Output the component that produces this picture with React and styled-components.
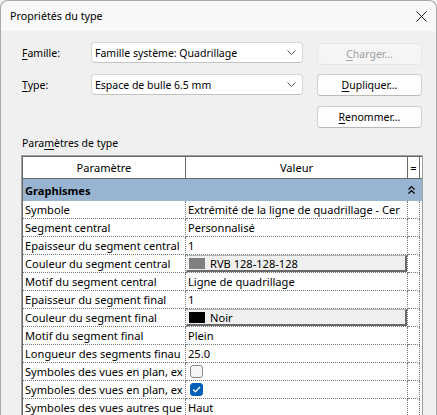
import React from 'react';
import styled, { createGlobalStyle } from 'styled-components';

const GlobalStyle = createGlobalStyle`
  html, body { margin: 0; padding: 0; background: #f0f0f0; }
  body { font-family: "Noto Sans", "Open Sans", sans-serif; font-size: 10.5px; color: #000; }
  * { box-sizing: border-box; }
`;

const Window = styled.div`
  height: 100vh;
  overflow: hidden;
  background: #f0f0f0;
  border: 1px solid #a8a8a8;
  border-bottom: none;
  border-radius: 8px 8px 0 0;
`;

// title bar
const TitleBar = styled.div`
  height: 30px;
  display: flex;
  align-items: center;
  justify-content: space-between;
  padding: 0 9px 0 9px;
  background: #f8f8f8;
  border-radius: 8px 8px 0 0;
  font-size: 10.7px;
`;

const Close = styled.svg`
  width: 11px;
  height: 11px;
`;

const Content = styled.div`
  padding: 11px 0 0 21px;
`;

// Famille / Type section
const FormGrid = styled.div`
  display: grid;
  grid-template-columns: 69px 212px 119px;
  grid-template-rows: 22px 22px 22px;
  row-gap: 10px;
  align-items: start;
`;

const Label = styled.div`
  height: 21px;
  display: flex;
  align-items: center;
`;

const Key = styled.span`
  text-decoration: underline;
  text-underline-offset: 2px;
`;

const Select = styled.div`
  height: 21px;
  display: flex;
  align-items: center;
  justify-content: space-between;
  padding: 0 6px 0 3px;
  background: #fff;
  border: 1px solid #d6d6d6;
  border-bottom-color: #c2c2c2;
  border-radius: 4px;
`;

const Button = styled.div`
  grid-column: 3;
  grid-row: ${p => p.row};
  justify-self: end;
  width: 105px;
  height: 22px;
  display: flex;
  align-items: center;
  justify-content: center;
  background: ${p => (p.disabled ? '#f5f5f5' : '#fdfdfd')};
  color: ${p => (p.disabled ? '#a0a0a0' : '#000')};
  border: 1px solid ${p => (p.disabled ? '#e6e6e6' : '#d0d0d0')};
  border-bottom-color: ${p => (p.disabled ? '#e6e6e6' : '#b8b8b8')};
  border-radius: 4px;
  margin-top: ${p => (p.disabled ? '1px' : '0')};
`;

const SectionLabel = styled.div`
  margin-top: 8px;
  line-height: 15px;
  height: 15px;
`;

// parameter table
const Table = styled.div`
  margin: 4px 0 0 -1px;
  width: 402px;
  border: 1px solid #a0a0a0;
  border-bottom: none;
  background: #fff;
  font-size: 11.1px;
`;

const TableInner = styled.div`
  border-left: 1px solid #696969;
  border-top: 1px solid #696969;
`;

const Row = styled.div`
  display: grid;
  grid-template-columns: 163px 222px 12px 2px;
  height: ${p => p.h || 18}px;
`;

const HeadCell = styled.div`
  display: flex;
  align-items: center;
  justify-content: center;
  border-right: ${p => (p.last ? 'none' : '1px solid #696969')};
  border-bottom: 1px solid #696969;
`;

const GroupRow = styled.div`
  height: 22px;
  display: flex;
  align-items: center;
  justify-content: space-between;
  padding: 0 7px 0 2px;
  background: #99b4d1;
  font-weight: bold;
`;

const Cell = styled.div`
  display: flex;
  align-items: center;
  padding-left: ${p => (p.pad != null ? p.pad : 2)}px;
  border-right: 1px dotted #7a7a7a;
  border-bottom: 1px dotted #7a7a7a;
  white-space: nowrap;
  overflow: hidden;
`;

const Spacer = styled.div``;

const ColorButton = styled.div`
  flex: 1;
  height: 100%;
  display: flex;
  align-items: center;
  gap: 5px;
  padding-left: 2px;
  background: #f0f0f0;
  border-top: 1px solid #b4b4b4;
  border-left: 1px solid #f8f8f8;
  border-right: 2px solid #6a6a6a;
  border-bottom: 2px solid #6a6a6a;
`;

const Swatch = styled.span`
  width: 16px;
  height: 11px;
  background: ${p => p.color};
`;

const Check = styled.span`
  width: 13px;
  height: 13px;
  margin-left: 2px;
  border-radius: 3px;
  display: flex;
  align-items: center;
  justify-content: center;
  background: ${p => (p.on ? '#005fb8' : '#f6f6f6')};
  border: 1px solid ${p => (p.on ? '#005fb8' : '#8a8a8a')};
`;

const Chevron = () => (
  <svg width="9" height="5" viewBox="0 0 9 5">
    <path d="M0.5 0.5 L4.5 4.5 L8.5 0.5" fill="none" stroke="#606060" strokeWidth="1" />
  </svg>
);

const Collapse = () => (
  <svg width="7" height="8" viewBox="0 0 7 8">
    <path d="M0.5 3.5 L3.5 0.5 L6.5 3.5 M0.5 7.5 L3.5 4.5 L6.5 7.5" fill="none" stroke="#000" strokeWidth="1.2" />
  </svg>
);

const rows = [
  { name: 'Symbole', value: 'Extrémité de la ligne de quadrillage - Cer' },
  { name: 'Segment central', value: 'Personnalisé' },
  { name: 'Epaisseur du segment central', value: '1' },
  { name: 'Couleur du segment central', color: '#808080', value: 'RVB 128-128-128' },
  { name: 'Motif du segment central', value: 'Ligne de quadrillage' },
  { name: 'Epaisseur du segment final', value: '1' },
  { name: 'Couleur du segment final', color: '#000', value: 'Noir' },
  { name: 'Motif du segment final', value: 'Plein' },
  { name: 'Longueur des segments finau', value: '25.0' },
  { name: 'Symboles des vues en plan, ex', check: false },
  { name: 'Symboles des vues en plan, ex', check: true },
  { name: 'Symboles des vues autres que', value: 'Haut' },
];

const ValueCell = ({ row }) => {
  if (row.color) {
    return (
      <Cell pad={0}>
        <ColorButton>
          <Swatch color={row.color} />
          {row.value}
        </ColorButton>
      </Cell>
    );
  }
  if (row.check != null) {
    return (
      <Cell>
        <Check on={row.check}>
          {row.check && (
            <svg width="9" height="7" viewBox="0 0 9 7">
              <path d="M1 3.5 L3.4 5.8 L8 1" fill="none" stroke="#fff" strokeWidth="1.3" />
            </svg>
          )}
        </Check>
      </Cell>
    );
  }
  return <Cell>{row.value}</Cell>;
};

export default function App() {
  return (
    <>
      <GlobalStyle />
      <Window>
        <TitleBar>
          <span>Propriétés du type</span>
          <Close viewBox="0 0 11 11">
            <path d="M0.5 0.5 L10.5 10.5 M10.5 0.5 L0.5 10.5" stroke="#1a1a1a" strokeWidth="1" />
          </Close>
        </TitleBar>
        <Content>
          <FormGrid>
            <Label><span><Key>F</Key>amille:</span></Label>
            <Select>Famille système: Quadrillage<Chevron /></Select>
            <Button row={1} disabled><span><Key>C</Key>harger…</span></Button>
            <Label><span><Key>T</Key>ype:</span></Label>
            <Select>Espace de bulle 6.5 mm<Chevron /></Select>
            <Button row={2}><span><Key>D</Key>upliquer…</span></Button>
            <Button row={3}><span><Key>R</Key>enommer…</span></Button>
          </FormGrid>
          <SectionLabel>Para<Key>m</Key>ètres de type</SectionLabel>
          <Table>
            <TableInner>
              <Row h={22}>
                <HeadCell>Paramètre</HeadCell>
                <HeadCell>Valeur</HeadCell>
                <HeadCell>=</HeadCell>
                <HeadCell last />
              </Row>
              <GroupRow>
                <span>Graphismes</span>
                <Collapse />
              </GroupRow>
              {rows.map((row, i) => (
                <Row key={i}>
                  <Cell>{row.name}</Cell>
                  <ValueCell row={row} />
                  <Cell />
                  <Spacer />
                </Row>
              ))}
            </TableInner>
          </Table>
        </Content>
      </Window>
    </>
  );
}
